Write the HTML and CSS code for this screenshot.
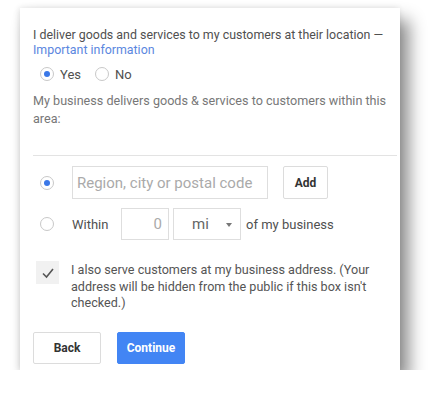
FILE: index.html
```html
<!DOCTYPE html>
<html>
<head>
<meta charset="utf-8">
<link rel="stylesheet" href="styles.css">
</head>
<body>
<div class="card">
  <p class="intro">I deliver goods and services to my customers at their location — <a class="link">Important information</a></p>
  <div class="yesno">
    <span class="radio on"></span><span class="opt">Yes</span>
    <span class="radio"></span><span class="opt">No</span>
  </div>
  <p class="desc">My business delivers goods &amp; services to customers within this area:</p>
  <div class="divider"></div>
  <div class="row row1">
    <span class="radio on"></span>
    <div class="field region">Region, city or postal code</div>
    <div class="btn add">Add</div>
  </div>
  <div class="row row2">
    <span class="radio"></span>
    <span class="within">Within</span>
    <div class="field num">0</div>
    <div class="field unit"><span>mi</span><span class="caret"></span></div>
    <span class="of">of my business</span>
  </div>
  <div class="check-row">
    <span class="checkbox"><svg width="14" height="14" viewBox="0 0 14 14"><path d="M2 7.5 L5.5 11 L12 3" fill="none" stroke="#555" stroke-width="1.6"/></svg></span>
    <p class="check-text">I also serve customers at my business address. (Your address will be hidden from the public if this box isn't checked.)</p>
  </div>
  <div class="actions">
    <div class="btn back">Back</div>
    <div class="btn primary">Continue</div>
  </div>
</div>
</body>
</html>
```
FILE: styles.css
```css
html, body { margin: 0; padding: 0; background: #fff; }
body { font-family: Roboto, "Noto Sans", sans-serif; color: #555; }
.card {
  margin: 8px 0 0 20px;
  width: 380px;
  height: 362px;
  box-sizing: border-box;
  background: #fff;
  padding: 19px 0 0 13px;
  box-shadow: 9px 12px 16px rgba(0,0,0,0.45), -1px 0 6px rgba(0,0,0,0.12);
}
p { margin: 0; }
.intro { font-size: 12.4px; line-height: 15px; color: #505050; }
.link { color: #5b87e0; }
.yesno { display: flex; align-items: center; margin-top: 9px; padding-left: 7px; height: 16px; }
.radio {
  width: 12px; height: 12px; border-radius: 50%;
  border: 1px solid #c8c8c8; background: #fff; box-sizing: content-box;
  display: inline-block; position: relative; flex: none;
}
.radio.on::after {
  content: ""; position: absolute; left: 3px; top: 3px; width: 6px; height: 6px;
  border-radius: 50%; background: #3b78e7;
}
.opt { font-size: 13px; margin-left: 6px; margin-right: 14px; color: #505050; }
.desc { font-size: 12.6px; line-height: 18px; margin-top: 10px; color: #777; width: 362px; }
.divider { height: 1px; background: #e3e3e3; margin-top: 27px; width: 364px; }
.row { display: flex; align-items: center; padding-left: 7px; }
.row1 { margin-top: 10px; }
.row2 { margin-top: 9px; }
.field {
  border: 1px solid #dedede; box-sizing: border-box; height: 33px;
  display: flex; align-items: center; font-size: 15px; color: #aaa;
}
.region { width: 196px; margin-left: 18px; padding-left: 4px; }
.btn {
  box-sizing: border-box; display: flex; align-items: center; justify-content: center;
  font-size: 12px; font-weight: bold; color: #333;
  border: 1px solid #dcdcdc; border-radius: 2px; background: #fff;
}
.add { width: 45px; height: 33px; margin-left: 15px; }
.within { font-size: 13px; color: #505050; margin-left: 18px; width: 49px; }
.num { width: 48px; height: 32px; justify-content: flex-end; padding-right: 6px; font-size: 15px; }
.unit { width: 68px; height: 32px; margin-left: 4px; justify-content: flex-start; padding-left: 18px; color: #666; position: relative; }
.caret {
  position: absolute; right: 8px; top: 14px; width: 0; height: 0;
  border-left: 3px solid transparent; border-right: 3px solid transparent; border-top: 4px solid #777;
}
.of { font-size: 13px; color: #505050; margin-left: 5px; }
.check-row { display: flex; margin-top: 21px; padding-left: 3px; }
.checkbox {
  width: 23px; height: 23px; background: #f1f1f1; flex: none;
  display: flex; align-items: center; justify-content: center;
}
.check-text { font-size: 12.6px; line-height: 16.5px; color: #555; margin-left: 12px; width: 300px; margin-top: 1px; }
.actions { display: flex; gap: 16px; margin-top: 20px; }
.back { width: 68px; height: 32px; }
.primary { width: 68px; height: 32px; background: #4285f4; border-color: #4285f4; color: #fff; }
```
